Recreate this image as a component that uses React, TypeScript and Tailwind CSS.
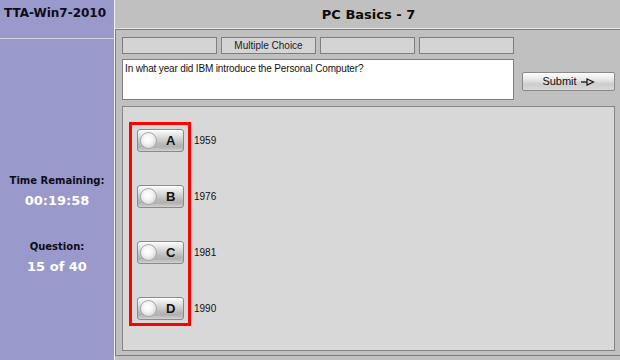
import React from "react";

const answers = [
  { l: "A", t: "1959" },
  { l: "B", t: "1976" },
  { l: "C", t: "1981" },
  { l: "D", t: "1990" },
];

function AnswerButton({ letter }: { letter: string }) {
  return (
    <div className="w-[47px] h-[23px] rounded-[3px] border border-[#8a8a8a] bg-[linear-gradient(to_bottom,#fbfbfb_0%,#e0e0e0_30%,#c0c0c0_60%,#b0b0b0_80%,#d2d2d2_100%)] flex items-center pl-[2px] gap-[9px] shadow-[inset_0_1px_0_#ffffff]">
      <div className="w-[17px] h-[17px] rounded-full border border-[#a8a8a8] bg-[radial-gradient(circle_at_45%_40%,#ffffff_0%,#f4f4f4_40%,#d0d0d0_85%,#b8b8b8_100%)]" />
      <span className="font-['Liberation_Sans'] font-bold text-[13px] leading-none text-[#111]">{letter}</span>
    </div>
  );
}

export default function App() {
  return (
    <div className="w-[620px] h-[360px] flex bg-[#c0c0c0] overflow-hidden font-['Liberation_Sans',sans-serif]">
      {/* Sidebar */}
      <aside className="w-[115px] h-full shrink-0 bg-[#9a99cb] border-r border-[#f2f2f2] flex flex-col">
        <div className="h-[39px] border-b border-[#cfcfe2] pl-[4px] pt-[6px] font-['DejaVu_Sans',sans-serif] font-bold text-[12px] leading-[15px] text-[#0c0c18]">
          TTA-Win7-2010
        </div>
        <div className="flex flex-col items-center mt-[136px] font-['DejaVu_Sans',sans-serif] font-bold">
          <div className="text-[10px] leading-[12px] text-[#0c0c18]">Time Remaining:</div>
          <div className="mt-[6px] text-[13px] leading-[16px] text-white">00:19:58</div>
          <div className="mt-[32px] text-[10px] leading-[12px] text-[#0c0c18]">Question:</div>
          <div className="mt-[6px] text-[13px] leading-[16px] text-white">15 of 40</div>
        </div>
      </aside>

      {/* Main */}
      <main className="flex-1 flex flex-col">
        <header className="h-[29px] border-b border-[#e6e6e6] flex items-center justify-center pt-[2px] font-['DejaVu_Sans',sans-serif] font-bold text-[13px] text-[#0c0c0c]">
          PC Basics - 7
        </header>
        <section className="flex-1 mr-[1px] mb-[4px] border border-[#7c7c7c] flex flex-col pl-[6px] pt-[7px] pr-[5px] pb-[4px]">
          <div className="flex">
            <div className="w-[392px] flex flex-col">
              <div className="flex gap-[4px]">
                <div className="flex-1 h-[17px] bg-[#d4d4d4] border border-[#7e7e7e]" />
                <div className="flex-1 h-[17px] bg-[#d4d4d4] border border-[#7e7e7e] flex items-center justify-center text-[10px] text-[#222]">
                  Multiple Choice
                </div>
                <div className="flex-1 h-[17px] bg-[#d4d4d4] border border-[#7e7e7e]" />
                <div className="flex-1 h-[17px] bg-[#d4d4d4] border border-[#7e7e7e]" />
              </div>
              <div className="mt-[5px] h-[41px] bg-white border border-[#7e7e7e] px-[2px] pt-[3px] text-[10px] leading-[12px] tracking-[-0.15px] text-[#111]">
                In what year did IBM introduce the Personal Computer?
              </div>
            </div>
            <div className="ml-[8px] mt-[35px] w-[93px] h-[19px] rounded-[2px] border border-[#8a8a8a] bg-[linear-gradient(to_bottom,#fdfdfd_0%,#e6e6e6_40%,#cdcdcd_65%,#d8d8d8_100%)] flex items-center justify-center gap-[4px] text-[11px] text-[#111]">
              <span>Submit</span>
              <svg width="14" height="8" viewBox="0 0 14 8">
                <line x1="0" y1="4" x2="6" y2="4" stroke="#111" strokeWidth="1.3" />
                <polygon points="6,1 12.5,4 6,7" fill="none" stroke="#111" strokeWidth="1.2" />
              </svg>
            </div>
          </div>
          <div className="mt-[6px] flex-1 bg-[#d8d8d8] border border-[#858585] pl-[6px] pt-[15px]">
            <div className="flex items-start">
              <div className="w-[62px] border-[3px] border-[#ff0000] pl-[5px] pt-[4px] pb-[3px] flex flex-col gap-[33px]">
                {answers.map((a) => (
                  <AnswerButton key={a.l} letter={a.l} />
                ))}
              </div>
              <div className="ml-[3px] pt-[7px] flex flex-col gap-[33px]">
                {answers.map((a) => (
                  <div key={a.t} className="h-[23px] flex items-center text-[10px] text-[#111]">
                    {a.t}
                  </div>
                ))}
              </div>
            </div>
          </div>
        </section>
      </main>
    </div>
  );
}
